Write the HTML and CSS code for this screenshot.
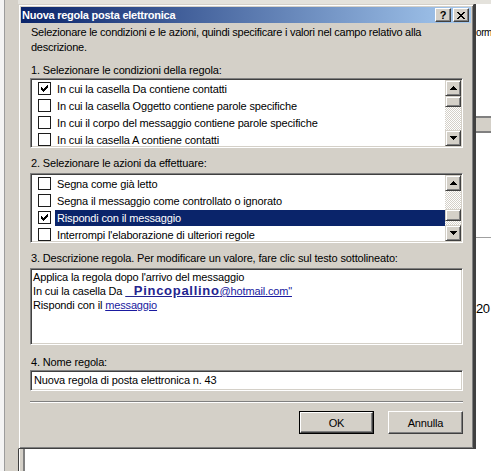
FILE: index.html
```html
<!DOCTYPE html>
<html>
<head>
<meta charset="utf-8">
<title>Nuova regola posta elettronica</title>
<link rel="stylesheet" href="styles.css">
</head>
<body>
<div class="desktop">
  <div class="bg-left"></div>
  <div class="bg-top"></div>
  <div class="bg-right">
    <div class="bg-r-text">orm</div>
    <div class="bg-r-bar"></div>
    <div class="bg-r-line"></div>
    <div class="bg-r-num">20</div>
  </div>
  <div class="bg-bottom"></div>
</div>

<div class="dialog">
  <div class="titlebar">
    <span class="title">Nuova regola posta elettronica</span>
    <div class="tb-btns">
      <span class="tbtn help">?</span>
      <span class="tbtn close"><svg width="8" height="7" viewBox="0 0 8 7" shape-rendering="crispEdges"><path d="M0 0h2v1h-2zM6 0h2v1h-2zM1 1h2v1h-2zM5 1h2v1h-2zM2 2h4v1h-4zM3 3h2v1h-2zM2 4h4v1h-4zM1 5h2v1h-2zM5 5h2v1h-2zM0 6h2v1h-2zM6 6h2v1h-2z" fill="#000"/></svg></span>
    </div>
  </div>

  <div class="content">
    <p class="intro">Selezionare le condizioni e le azioni, quindi specificare i valori nel campo relativo alla<br>descrizione.</p>

    <div class="label l1">1. Selezionare le condizioni della regola:</div>
    <div class="listbox lb1">
      <div class="items">
        <div class="item"><span class="cb checked"><svg width="7" height="7" viewBox="0 0 7 7" shape-rendering="crispEdges"><path d="M6 0h1v3h-1zM5 1h1v3h-1zM4 2h1v3h-1zM3 3h1v3h-1zM2 4h1v3h-1zM1 3h1v3h-1zM0 2h1v3h-1z" fill="#000"/></svg></span><span class="txt">In cui la casella Da contiene contatti</span></div>
        <div class="item"><span class="cb"></span><span class="txt">In cui la casella Oggetto contiene parole specifiche</span></div>
        <div class="item"><span class="cb"></span><span class="txt">In cui il corpo del messaggio contiene parole specifiche</span></div>
        <div class="item"><span class="cb"></span><span class="txt">In cui la casella A contiene contatti</span></div>
      </div>
      <div class="scrollbar">
        <span class="sbtn"><svg width="7" height="4" viewBox="0 0 7 4" shape-rendering="crispEdges"><path d="M3 0h1v1h-1zM2 1h3v1h-3zM1 2h5v1h-5zM0 3h7v1h-7z" fill="#000"/></svg></span>
        <div class="track">
          <span class="thumb t1"></span>
          <span class="dither"></span>
        </div>
        <span class="sbtn"><svg width="7" height="4" viewBox="0 0 7 4" shape-rendering="crispEdges"><path d="M0 0h7v1h-7zM1 1h5v1h-5zM2 2h3v1h-3zM3 3h1v1h-1z" fill="#000"/></svg></span>
      </div>
    </div>

    <div class="label l2">2. Selezionare le azioni da effettuare:</div>
    <div class="listbox lb2">
      <div class="items">
        <div class="item"><span class="cb"></span><span class="txt">Segna come già letto</span></div>
        <div class="item"><span class="cb"></span><span class="txt">Segna il messaggio come controllato o ignorato</span></div>
        <div class="item sel"><span class="cb checked"><svg width="7" height="7" viewBox="0 0 7 7" shape-rendering="crispEdges"><path d="M6 0h1v3h-1zM5 1h1v3h-1zM4 2h1v3h-1zM3 3h1v3h-1zM2 4h1v3h-1zM1 3h1v3h-1zM0 2h1v3h-1z" fill="#000"/></svg></span><span class="txt">Rispondi con il messaggio</span></div>
        <div class="item"><span class="cb"></span><span class="txt">Interrompi l'elaborazione di ulteriori regole</span></div>
      </div>
      <div class="scrollbar">
        <span class="sbtn"><svg width="7" height="4" viewBox="0 0 7 4" shape-rendering="crispEdges"><path d="M3 0h1v1h-1zM2 1h3v1h-3zM1 2h5v1h-5zM0 3h7v1h-7z" fill="#000"/></svg></span>
        <div class="track">
          <span class="dither d-top"></span>
          <span class="thumb t2"></span>
          <span class="dither"></span>
        </div>
        <span class="sbtn"><svg width="7" height="4" viewBox="0 0 7 4" shape-rendering="crispEdges"><path d="M0 0h7v1h-7zM1 1h5v1h-5zM2 2h3v1h-3zM3 3h1v1h-1z" fill="#000"/></svg></span>
      </div>
    </div>

    <div class="label l3">3. Descrizione regola. Per modificare un valore, fare clic sul testo sottolineato:</div>
    <div class="descbox">
      <div class="dline">Applica la regola dopo l'arrivo del messaggio</div>
      <div class="dline">In cui la casella Da <a class="lnk big">&nbsp;&nbsp;Pincopallino</a><a class="lnk">@hotmail.com"</a></div>
      <div class="dline">Rispondi con il <a class="lnk">messaggio</a></div>
    </div>

    <div class="label l4">4. Nome regola:</div>
    <div class="field">Nuova regola di posta elettronica n. 43</div>

    <div class="sep"></div>

    <div class="buttons">
      <span class="btn default"><span class="btn-in">OK</span></span>
      <span class="btn"><span class="btn-in">Annulla</span></span>
    </div>
  </div>
</div>
</body>
</html>
```

FILE: styles.css
```css
* { box-sizing: border-box; margin: 0; padding: 0; }
html, body { width: 491px; height: 471px; overflow: hidden; }
body {
  position: relative;
  background: #fff;
  color: #000;
  font-family: "Liberation Sans Narrow", "Liberation Sans", Arial, sans-serif;
  font-size: 11px;
  letter-spacing: -0.15px;
}

/* ---------- background application ---------- */
.desktop {
  display: grid;
  grid-template-columns: 18px 456px 17px;
  grid-template-rows: 4px 445px 22px;
  width: 491px;
  height: 471px;
}
.bg-left {
  grid-column: 1;
  grid-row: 1 / 4;
  background: linear-gradient(to right, #f4f4f4 0 4px, #9c9c9c 4px 5px, #d4d0c8 5px);
}
.bg-top {
  grid-column: 2 / 4;
  grid-row: 1;
  background: #e4e2dc;
}
.bg-right {
  grid-column: 3;
  grid-row: 2;
  background: #fff;
  border-left: 2px solid #404040;
  display: flex;
  flex-direction: column;
  overflow: hidden;
}
.bg-r-text { margin-top: 22px; line-height: 14px; font-size: 10px; letter-spacing: -0.4px; white-space: nowrap; }
.bg-r-bar {
  margin-top: 76px;
  height: 17px;
  background: #d4d0c8;
  border-top: 2px solid #808080;
  border-bottom: 2px solid #808080;
}
.bg-r-line { margin-top: 104px; height: 1px; background: #a0a0a0; }
.bg-r-num { margin-top: 64px; font-family: "Liberation Sans", Arial, sans-serif; font-size: 13px; line-height: 14px; letter-spacing: -0.5px; }
.bg-bottom {
  grid-column: 2 / 4;
  grid-row: 3;
  background: linear-gradient(to right, #404040 0 1px, #fff 1px 2px, #d4d0c8 2px 5px, #808080 5px 7px, #fff 7px);
}

/* ---------- dialog ---------- */
.dialog {
  position: absolute;
  left: 18px;
  top: 4px;
  width: 456px;
  height: 445px;
  background: #d4d0c8;
  border: 1px solid;
  border-color: #d4d0c8 #404040 #404040 #d4d0c8;
  box-shadow: inset 1px 1px #fff, inset -1px -1px #808080;
  padding: 2px;
  display: flex;
  flex-direction: column;
}
.titlebar {
  height: 16px;
  background: linear-gradient(to right, #0a246a, #a6caf0);
  display: flex;
  align-items: center;
  justify-content: space-between;
  padding: 0 2px 0 1px;
}
.title {
  color: #fff;
  font-family: "Liberation Sans", Arial, sans-serif;
  font-weight: bold;
  font-size: 11px;
  letter-spacing: -0.25px;
  line-height: 14px;
}
.tb-btns { display: flex; gap: 2px; }
.tbtn {
  width: 16px;
  height: 14px;
  background: #d4d0c8;
  border: 1px solid;
  border-color: #fff #404040 #404040 #fff;
  box-shadow: inset -1px -1px #808080;
  display: flex;
  align-items: center;
  justify-content: center;
  font-family: "Liberation Sans", Arial, sans-serif;
  font-weight: bold;
  font-size: 11px;
  line-height: 12px;
  letter-spacing: 0;
}

.content {
  flex: 1;
  display: flex;
  flex-direction: column;
  padding: 0 8px 0 9px;
}
.intro { margin-top: 2px; line-height: 15px; padding-left: 1px; letter-spacing: -0.25px; }
.label { line-height: 14px; padding-left: 1px; }
.l1 { margin-top: 8px; }
.l2 { margin-top: 8px; }
.l3 { margin-top: 8px; }
.l4 { margin-top: 10px; }

.listbox {
  height: 70px;
  background: #fff;
  border: 1px solid;
  border-color: #808080 #fff #fff #808080;
  box-shadow: inset 1px 1px #404040, inset -1px -1px #d4d0c8;
  padding: 1px;
  display: flex;
}
.lb1 { margin-top: 1px; }
.lb2 { margin-top: 3px; }
.items { flex: 1; overflow: hidden; }
.item {
  height: 17px;
  display: flex;
  align-items: center;
  padding-left: 6px;
  line-height: 14px;
}
.cb {
  width: 13px;
  height: 13px;
  flex: none;
  border: 1px solid #1c1c1c;
  background: #fff;
  display: flex;
  align-items: center;
  justify-content: center;
}
.txt {
  margin-left: 4px;
  padding-left: 2px;
  flex: 1;
  height: 16px;
  display: flex;
  align-items: center;
  white-space: nowrap;
}
.sel .txt { background: #0a246a; color: #fff; }

.scrollbar {
  width: 16px;
  flex: none;
  display: flex;
  flex-direction: column;
}
.sbtn {
  height: 16px;
  flex: none;
  background: #d4d0c8;
  border: 1px solid;
  border-color: #d4d0c8 #404040 #404040 #d4d0c8;
  box-shadow: inset 1px 1px #fff, inset -1px -1px #808080;
  display: flex;
  align-items: center;
  justify-content: center;
}
.track { flex: 1; display: flex; flex-direction: column; }
.dither {
  flex: 1;
  background: repeating-conic-gradient(#fff 0 25%, #d4d0c8 0 50%) 0 0 / 2px 2px;
}
.d-top { flex: none; height: 18px; }
.thumb {
  flex: none;
  background: #d4d0c8;
  border: 1px solid;
  border-color: #d4d0c8 #404040 #404040 #d4d0c8;
  box-shadow: inset 1px 1px #fff, inset -1px -1px #808080;
}
.t1 { height: 11px; }
.t2 { height: 12px; }

.descbox {
  margin-top: 3px;
  height: 77px;
  background: #fff;
  border: 1px solid;
  border-color: #808080 #fff #fff #808080;
  box-shadow: inset 1px 1px #404040, inset -1px -1px #d4d0c8;
  padding: 1px 2px;
}
.dline { line-height: 14px; height: 14px; white-space: nowrap; }
.lnk { color: #1a1aa0; text-decoration: underline; }
.lnk.big {
  font-family: "Liberation Sans", Arial, sans-serif;
  font-weight: bold;
  font-size: 13px;
  letter-spacing: 0.7px;
  color: #24248f;
}

.field {
  margin-top: 1px;
  height: 21px;
  background: #fff;
  border: 1px solid;
  border-color: #808080 #fff #fff #808080;
  box-shadow: inset 1px 1px #404040, inset -1px -1px #d4d0c8;
  padding: 0 3px;
  line-height: 19px;
}

.sep {
  margin-top: 10px;
  height: 2px;
  border-top: 1px solid #808080;
  border-bottom: 1px solid #fff;
}

.buttons {
  margin-top: 8px;
  display: flex;
  justify-content: flex-end;
  gap: 14px;
}
.btn {
  width: 75px;
  height: 23px;
  display: flex;
}
.btn-in {
  flex: 1;
  background: #d4d0c8;
  border: 1px solid;
  border-color: #fff #404040 #404040 #fff;
  box-shadow: inset -1px -1px #808080;
  display: flex;
  align-items: center;
  justify-content: center;
  line-height: 14px;
}
.btn.default { border: 1px solid #000; }
```
